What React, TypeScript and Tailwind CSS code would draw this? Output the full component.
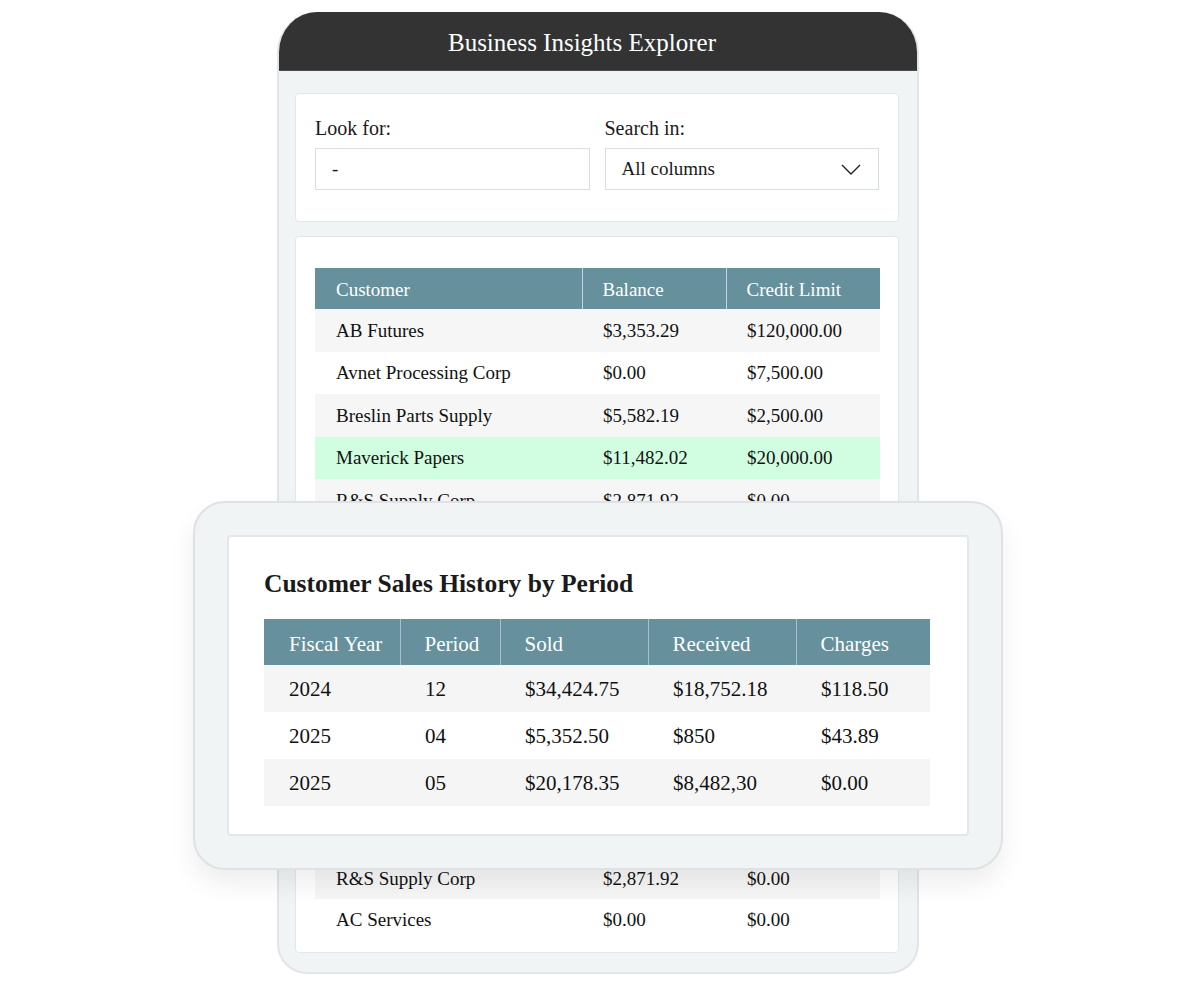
import React from "react";

const customers = [
  { name: "AB Futures", balance: "$3,353.29", limit: "$120,000.00", tone: "shade" },
  { name: "Avnet Processing Corp", balance: "$0.00", limit: "$7,500.00", tone: "plain" },
  { name: "Breslin Parts Supply", balance: "$5,582.19", limit: "$2,500.00", tone: "shade" },
  { name: "Maverick Papers", balance: "$11,482.02", limit: "$20,000.00", tone: "green" },
  { name: "R&S Supply Corp", balance: "$2,871.92", limit: "$0.00", tone: "shade" },
];

const bottomRows = [
  { name: "R&S Supply Corp", balance: "$2,871.92", limit: "$0.00", tone: "shade" },
  { name: "AC Services", balance: "$0.00", limit: "$0.00", tone: "plain" },
];

const history = [
  { year: "2024", period: "12", sold: "$34,424.75", received: "$18,752.18", charges: "$118.50", shade: true },
  { year: "2025", period: "04", sold: "$5,352.50", received: "$850", charges: "$43.89", shade: false },
  { year: "2025", period: "05", sold: "$20,178.35", received: "$8,482,30", charges: "$0.00", shade: true },
];

function toneClass(tone: string) {
  if (tone === "green") return "bg-[#d1fde1]";
  if (tone === "shade") return "bg-[#f6f6f6]";
  return "bg-white";
}

function SalesHistory() {
  return (
    <div className="absolute left-[193px] top-[501px] w-[810px] h-[369px] rounded-[32px] border-2 border-[#dfe2e4] bg-[#f1f4f5] p-[32px] shadow-[0_14px_26px_rgba(0,0,0,0.07)]">
      <div className="h-full bg-white border-2 border-[#e4e7e9] rounded-[4px] pt-[32px] pl-[35px] pr-[37px]">
        <h2 className="text-[25.5px] leading-[30px] font-bold text-[#1a1a1a] mb-[20px]">
          Customer Sales History by Period
        </h2>
        <table className="w-full border-collapse text-[21px] leading-none">
          <colgroup>
            <col className="w-[136px]" />
            <col className="w-[100px]" />
            <col className="w-[148px]" />
            <col className="w-[148px]" />
            <col />
          </colgroup>
          <thead>
            <tr className="bg-[#66909b] text-white h-[46px]">
              <th className="text-left font-normal pl-[25px] pt-[4px]">Fiscal Year</th>
              <th className="text-left font-normal pl-[24px] pt-[4px] border-l border-[#a9c0c6]">Period</th>
              <th className="text-left font-normal pl-[24px] pt-[4px] border-l border-[#a9c0c6]">Sold</th>
              <th className="text-left font-normal pl-[24px] pt-[4px] border-l border-[#a9c0c6]">Received</th>
              <th className="text-left font-normal pl-[24px] pt-[4px] border-l border-[#a9c0c6]">Charges</th>
            </tr>
          </thead>
          <tbody className="text-[#111]">
            {history.map((r, i) => (
              <tr key={i} className={`h-[47px] ${r.shade ? "bg-[#f5f5f5]" : "bg-white"}`}>
                <td className="pl-[25px] pt-[2px]">{r.year}</td>
                <td className="pl-[25px] pt-[2px]">{r.period}</td>
                <td className="pl-[25px] pt-[2px]">{r.sold}</td>
                <td className="pl-[25px] pt-[2px]">{r.received}</td>
                <td className="pl-[25px] pt-[2px]">{r.charges}</td>
              </tr>
            ))}
          </tbody>
        </table>
      </div>
    </div>
  );
}

export default function App() {
  return (
    <div className="relative min-h-screen bg-white font-['Liberation_Serif',serif] pl-[277px] pt-[12px]">
      {/* Main explorer frame */}
      <div className="w-[642px] rounded-t-[40px] rounded-b-[30px] border-2 border-t-0 border-[#e2e5e7] bg-[#f1f4f5] overflow-hidden">
        <header className="h-[59px] bg-[#333333] border-b border-[#4d4d4d] flex items-center justify-center pt-[3px] pr-[32px] -mx-[2px]">
          <span className="text-white text-[25px]">Business Insights Explorer</span>
        </header>

        <div className="pl-[16px] pr-[18px] pt-[22px] pb-[19px] flex flex-col gap-[14px]">
          {/* Search */}
          <div className="bg-white border border-[#e3e7ea] rounded-[4px] px-[19px] pt-[21px] pb-[31px]">
            <div className="grid grid-cols-2 gap-[15px] text-[20px] text-[#1a1a1a]">
              <div>
                <div className="leading-[26px] mb-[7px]">Look for:</div>
                <div className="h-[42px] border border-[#d9dee2] flex items-center pl-[16px] pt-[1px] text-[19px]">-</div>
              </div>
              <div>
                <div className="leading-[26px] mb-[7px]">Search in:</div>
                <div className="h-[42px] border border-[#d9dee2] flex items-center justify-between pl-[16px] pr-[17px] pt-[1px] text-[19px]">
                  <span>All columns</span>
                  <svg width="20" height="11" viewBox="0 0 20 11" fill="none">
                    <path d="M1 1l9 9 9-9" stroke="#222" strokeWidth="1.4" />
                  </svg>
                </div>
              </div>
            </div>
          </div>

          {/* Customers table */}
          <div className="bg-white border border-[#e3e7ea] rounded-[4px] pl-[19px] pr-[18px] pt-[31px] pb-[12px]">
            <table className="w-full border-collapse text-[19px] leading-none text-[#111]">
              <colgroup>
                <col className="w-[267px]" />
                <col className="w-[144px]" />
                <col />
              </colgroup>
              <thead>
                <tr className="bg-[#66909b] text-white h-[41px]">
                  <th className="text-left font-normal pl-[21px] pt-[1px]">Customer</th>
                  <th className="text-left font-normal pl-[20px] pt-[1px] border-l border-[#c5d5d9]">Balance</th>
                  <th className="text-left font-normal pl-[20px] pt-[1px] border-l border-[#c5d5d9]">Credit Limit</th>
                </tr>
              </thead>
              <tbody>
                {customers.map((c, i) => (
                  <tr key={i} className={`h-[42.5px] ${toneClass(c.tone)}`}>
                    <td className="pl-[21px]">{c.name}</td>
                    <td className="pl-[21px]">{c.balance}</td>
                    <td className="pl-[21px]">{c.limit}</td>
                  </tr>
                ))}
                <tr className="h-[336px]">
                  <td colSpan={3}></td>
                </tr>
                {bottomRows.map((c, i) => (
                  <tr key={i} className={`h-[41px] ${toneClass(c.tone)}`}>
                    <td className="pl-[21px]">{c.name}</td>
                    <td className="pl-[21px]">{c.balance}</td>
                    <td className="pl-[21px]">{c.limit}</td>
                  </tr>
                ))}
              </tbody>
            </table>
          </div>
        </div>
      </div>

      <SalesHistory />
    </div>
  );
}
